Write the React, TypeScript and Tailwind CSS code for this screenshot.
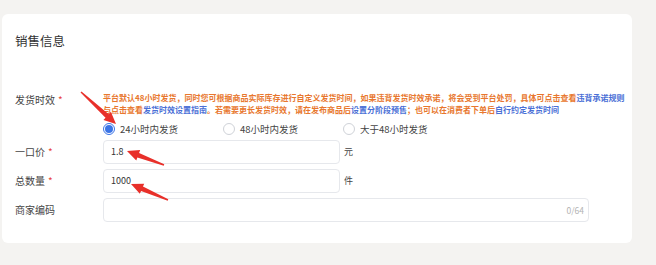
import React from "react";

type Pt = [number, number];

// annotation arrow: thin tail widening toward a triangular head
function Arrow({ from, to }: { from: Pt; to: Pt }) {
  const dx = to[0] - from[0];
  const dy = to[1] - from[1];
  const len = Math.hypot(dx, dy);
  const ux = dx / len;
  const uy = dy / len;
  const nx = -uy;
  const ny = ux;
  const head = 12;
  const bx = to[0] - ux * head;
  const by = to[1] - uy * head;
  const p = (x: number, y: number, w: number) => `${x + nx * w},${y + ny * w}`;
  const pts = [
    p(from[0], from[1], 0.7),
    p(bx, by, 2.4),
    p(bx, by, 5.5),
    `${to[0]},${to[1]}`,
    p(bx, by, -5.5),
    p(bx, by, -2.4),
    p(from[0], from[1], -0.7),
  ].join(" ");
  return <polygon points={pts} fill="#e8302a" />;
}

function Radio({ checked, label }: { checked?: boolean; label: string }) {
  return (
    <div className="flex w-[120px] items-center gap-[5px]">
      <span
        className={
          checked
            ? "flex h-[12px] w-[12px] items-center justify-center rounded-full border border-[#3b74e6] bg-white"
            : "h-[12px] w-[12px] rounded-full border border-[#cfd2d8] bg-white"
        }
      >
        {checked && <span className="h-[8px] w-[8px] rounded-full bg-[#3b74e6]" />}
      </span>
      <span className="text-[9.5px] leading-[14px] text-[#444]">{label}</span>
    </div>
  );
}

function Label({ text, required }: { text: string; required?: boolean }) {
  return (
    <div className="w-[88px] shrink-0 text-[10px] leading-[12px] text-[#444]">
      {text}
      {required && <span className="ml-[3px] text-[#e8453c]">*</span>}
    </div>
  );
}

export default function App() {
  return (
    <div
      className="relative h-[265px] w-[656px] overflow-hidden bg-[#f4f3f1] pl-[2px] pt-[14px]"
      style={{ fontFamily: '"Noto Sans CJK SC", "Noto Sans", sans-serif' }}
    >
      <div className="h-[229px] w-[630px] rounded-[6px] bg-white pl-[13px] pt-[18px]">
        <h2 className="text-[12.5px] leading-[18px] text-[#333]">销售信息</h2>

        <div className="mt-[42px] flex">
          <div className="pt-[2px]">
            <Label text="发货时效" required />
          </div>
          <div>
            <div className="whitespace-nowrap text-[8px] font-semibold leading-[12px] text-[#e8772e]">
              平台默认48小时发货，同时您可根据商品实际库存进行自定义发货时间，如果违背发货时效承诺，将会受到平台处罚，具体可点击查看
              <span className="text-[#4a6fd6]">违背承诺规则</span>
            </div>
            <div className="whitespace-nowrap text-[8px] font-semibold leading-[12px] text-[#e8772e]">
              与点击查看<span className="text-[#4a6fd6]">发货时效设置指南</span>。若需要更长发货时效，请在发布商品后
              <span className="text-[#4a6fd6]">设置分阶段预售</span>；也可以在消费者下单后
              <span className="text-[#4a6fd6]">自行约定发货时间</span>
            </div>
            <div className="mt-[6px] flex">
              <Radio checked label="24小时内发货" />
              <Radio label="48小时内发货" />
              <Radio label="大于48小时发货" />
            </div>
          </div>
        </div>

        <div className="mt-[4px] flex flex-col gap-[5px]">
          <div className="flex items-center">
            <Label text="一口价" required />
            <div className="flex h-[24px] w-[237px] items-center rounded-[4px] border border-[#e6e8ec] px-[7px] text-[9px] text-[#333]">
              1.8
            </div>
            <span className="ml-[4px] text-[9px] text-[#444]">元</span>
          </div>
          <div className="flex items-center">
            <Label text="总数量" required />
            <div className="flex h-[24px] w-[237px] items-center rounded-[4px] border border-[#e6e8ec] px-[7px] text-[9px] text-[#333]">
              1000
            </div>
            <span className="ml-[4px] text-[9px] text-[#444]">件</span>
          </div>
          <div className="flex items-center">
            <Label text="商家编码" />
            <div className="flex h-[24px] w-[486px] items-center justify-end rounded-[4px] border border-[#e6e8ec] px-[4px] text-[8.5px] text-[#b3b3b3]">
              0/64
            </div>
          </div>
        </div>
      </div>

      <svg className="pointer-events-none absolute inset-0" width="656" height="265">
        <Arrow from={[81, 92]} to={[116, 124]} />
        <Arrow from={[164, 165]} to={[127, 151]} />
        <Arrow from={[168, 200]} to={[131, 184]} />
      </svg>
    </div>
  );
}
